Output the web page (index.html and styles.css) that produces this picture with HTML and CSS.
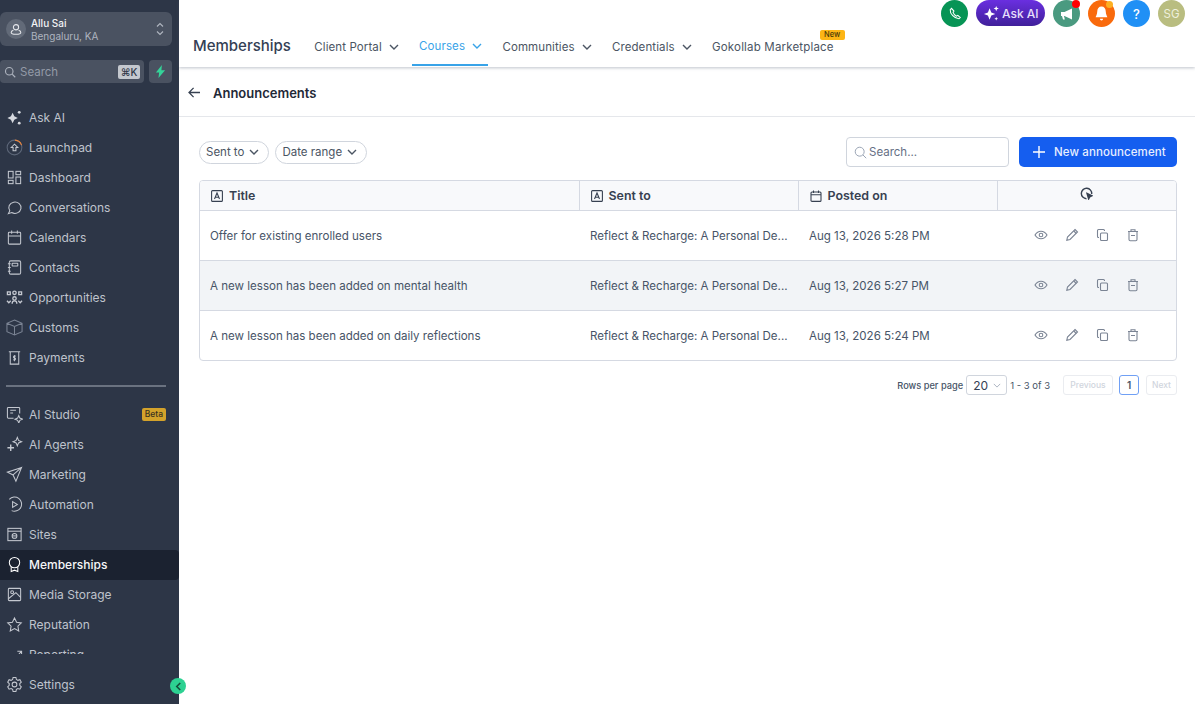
FILE: index.html
```html
<!DOCTYPE html>
<html lang="en">
<head>
<meta charset="utf-8">
<title>Memberships - Announcements</title>
<link rel="stylesheet" href="styles.css">
</head>
<body>
<div class="app">
  <aside class="sidebar">
    <div class="account">
      <span class="avatar"><svg viewBox="0 0 16 16" width="14" height="14" fill="none" stroke="#e5e7eb" stroke-width="1.2"><circle cx="8" cy="6" r="3"/><path d="M5 9.5c-1.500.5-2.500 1.500-2.500 2.500s2 2 5.500 2 5.500-1 5.500-2-1-2-2.500-2.500"/></svg></span>
      <span class="account-text"><b>Allu Sai</b><small>Bengaluru, KA</small></span>
      <svg class="updown" viewBox="0 0 10 16" width="10" height="16" fill="none" stroke="#aeb4bf" stroke-width="1.2"><path d="M2 5.500 5 2.500l3 3M2 10.500l3 3 3-3"/></svg>
    </div>
    <div class="search-row">
      <div class="side-search">
        <svg viewBox="0 0 16 16" width="12" height="12" fill="none" stroke="#aeb4bf" stroke-width="1.500"><circle cx="7" cy="7" r="5"/><path d="m11 11 4 4"/></svg>
        <span class="side-search-label">Search</span>
        <kbd>⌘K</kbd>
      </div>
      <div class="bolt"><svg viewBox="0 0 12 14" width="11" height="13"><path d="M7.500 0 1 8h3.500L3.800 14 11 5.500H7z" fill="#34d399"/></svg></div>
    </div>
    <nav class="nav">
      <a class="item"><svg class="ic ic-fill" viewBox="0 0 18 18"><path d="M7 4 8.800 7.700 12.500 9.500 8.800 11.300 7 15 5.200 11.300 1.500 9.500 5.200 7.700z"/><circle cx="14" cy="3.500" r="1.500"/><circle cx="14" cy="15" r="1.500"/></svg>Ask AI</a>
      <a class="item"><svg class="ic" viewBox="0 0 18 18"><circle cx="9" cy="9" r="7.800" stroke="#5c6678"/><path d="M9.500 1.200A7.800 7.800 0 0 1 16.500 6.500" stroke="#e8833a"/><path d="M5.500 9 9 5.500l3.500 3.500H10.500v3.500h-3V9z"/></svg>Launchpad</a>
      <a class="item"><svg class="ic" viewBox="0 0 18 18"><rect x="2.500" y="2.500" width="5" height="7"/><rect x="10.500" y="2.500" width="5" height="3.500"/><rect x="10.500" y="8.500" width="5" height="7"/><rect x="2.500" y="12" width="5" height="3.500"/></svg>Dashboard</a>
      <a class="item"><svg class="ic" viewBox="0 0 18 18"><path d="M2.500 15.500 4 12.500A6.500 6 0 1 1 6 14.300z"/></svg>Conversations</a>
      <a class="item"><svg class="ic" viewBox="0 0 18 18"><rect x="2.500" y="3.500" width="13" height="12.500" rx="1"/><path d="M2.500 7.500h13M6 1.500v3.500M12 1.500v3.500"/></svg>Calendars</a>
      <a class="item"><svg class="ic" viewBox="0 0 18 18"><rect x="3.500" y="2" width="12" height="14" rx="1.500"/><rect x="6.500" y="4.500" width="6" height="3" rx=".5"/><path d="M2 5h3M2 9h3M2 13h3"/></svg>Contacts</a>
      <a class="item"><svg class="ic ic-dense" viewBox="0 0 18 18"><path d="M1.500 3h3v3h-3zM13.500 3h3v3h-3zM1 12.500l2 2 2-2M13 12.500l2 2 2-2"/><circle cx="9" cy="4" r="1.800"/><circle cx="9" cy="10" r="1.800"/><path d="M6.500 15.500c0-2 1-3 2.500-3s2.500 1 2.500 3"/></svg>Opportunities</a>
      <a class="item"><svg class="ic ic-dim" viewBox="0 0 18 18"><path d="M9 1 17 4.500v9L9 17 1 13.500v-9zM1 4.500 9 8l8-3.500M9 8v9"/></svg>Customs</a>
      <a class="item"><svg class="ic" viewBox="0 0 18 18"><path d="M3 3h12M4.500 3v13h9V3"/><path d="M10.500 7.500H8v2h2v2H7.500M9 6.500v6.500" stroke-width="1"/></svg>Payments</a>
      <hr class="divider">
      <a class="item"><svg class="ic" viewBox="0 0 18 18"><path d="M8 13H2.500a1 1 0 0 1-1-1V2.500a1 1 0 0 1 1-1h11a1 1 0 0 1 1 1V8"/><path d="M4.500 4.500h6M4.500 7.500h3"/><path d="M13.500 10l1.200 2.800 2.800 1.200-2.800 1.200-1.200 2.800-1.200-2.800L9.500 14l2.800-1.200z"/></svg>AI Studio<span class="beta">Beta</span></a>
      <a class="item"><svg class="ic" viewBox="0 0 18 18"><path d="M12 1.500l1.300 3.200 3.200 1.300-3.200 1.300L12 10.500l-1.300-3.200L7.500 6l3.200-1.300z"/><path d="M5 9v7M1.500 12.500h7" stroke-width="1.500"/></svg>AI Agents</a>
      <a class="item"><svg class="ic" viewBox="0 0 18 18"><path d="M16.500 1.500 1.500 6.500l6 3 3 6.500zM7.500 9.500l9-8"/></svg>Marketing</a>
      <a class="item"><svg class="ic" viewBox="0 0 18 18"><path d="M3.500 3.500A7.500 7.500 0 1 1 6 15.500"/><path d="M7 6v6l5-3z"/></svg>Automation</a>
      <a class="item"><svg class="ic" viewBox="0 0 18 18"><rect x="2" y="2.500" width="14" height="13"/><path d="M2 5.500h14"/><circle cx="9" cy="10.500" r="2.500"/><path d="M6.500 10.500h5"/></svg>Sites</a>
      <a class="item active"><svg class="ic" viewBox="0 0 18 18" stroke-width="1.500"><circle cx="9" cy="7" r="5.500"/><path d="M5.500 11.500V16.500L9 15l3.500 1.500V11.500"/></svg>Memberships</a>
      <a class="item"><svg class="ic" viewBox="0 0 18 18"><rect x="2.500" y="2.500" width="13" height="13" rx="1"/><circle cx="6.500" cy="6.500" r="1.500"/><path d="M2.500 13.500 10.500 7l5 5"/></svg>Media Storage</a>
      <a class="item"><svg class="ic" viewBox="0 0 18 18"><path d="m9 2 2.200 4.600 5 .7-3.600 3.500.9 5L9 13.400l-4.500 2.400.9-5L1.800 7.300l5-.7z"/></svg>Reputation</a>
      <a class="item"><svg class="ic" viewBox="0 0 18 18"><path d="M2 15l5-5 3 3 6-7M12 5.500h4.500V10"/></svg>Reporting</a>
    </nav>
    <div class="settings">
      <a class="item"><svg class="ic" viewBox="0 0 18 18"><circle cx="9" cy="9" r="2.500"/><path d="M7.500 1.500h3l.5 2.200 1.600.9 2.100-.7 1.500 2.600-1.600 1.500v1.900l1.600 1.500-1.500 2.600-2.100-.7-1.600.9-.5 2.300h-3L7 14.200l-1.600-.9-2.100.7-1.500-2.600L3.400 9.900V8L1.800 6.500l1.500-2.600 2.100.7L7 3.700z"/></svg>Settings</a>
    </div>
    <span class="collapse"><svg viewBox="0 0 8 10" width="7" height="9" fill="none" stroke="#134e3a" stroke-width="1.800"><path d="M6 1 2 5l4 4"/></svg></span>
  </aside>

  <main class="main">
    <header class="header">
      <div class="top-actions">
        <span class="round phone"><svg viewBox="0 0 16 16" width="14" height="14" fill="none" stroke="#fff" stroke-width="1.200"><path d="M4 1.500 2.500 3c-.5 4.500 5 10.500 10 10.500l1.500-1.500-2.800-2.500-1.700 1C8 9.800 6.500 8 5.800 6.200l1-1.500z"/></svg></span>
        <span class="ask-ai"><svg viewBox="0 0 18 18" width="17" height="17" fill="#fff"><path d="M7 3.500 8.800 8 13 9.500 8.800 11 7 15.500 5.200 11 1 9.500 5.200 8z"/><path d="M14 1l.8 2 2 .8-2 .8-.8 2-.8-2-2-.8 2-.8zM14 12.500l.6 1.400 1.400.6-1.400.6-.6 1.400-.6-1.400-1.400-.6 1.400-.6z"/></svg>Ask AI</span>
        <span class="round megaphone"><svg viewBox="0 0 16 16" width="16" height="16" fill="#fff"><path d="M2 6h3.500L13 2.500v11L5.500 10H5l.8 3.500H4L3 10H2z"/></svg><i class="dot dot-red"></i></span>
        <span class="round bell"><svg viewBox="0 0 16 16" width="17" height="17" fill="#fff"><path d="M8 1.500c-2.500 0-4 2-4 4.500 0 3-1.500 4.500-1.500 5.500h11c0-1-1.500-2.500-1.500-5.500 0-2.500-1.500-4.500-4-4.500zM6.500 13h3a1.500 1.500 0 0 1-3 0z"/></svg><i class="dot dot-amber"></i></span>
        <span class="round help">?</span>
        <span class="round user">SG</span>
      </div>
      <div class="tabs">
        <h1 class="app-title">Memberships</h1>
        <a class="tab">Client Portal<svg class="chev" viewBox="0 0 10 6"><path d="m1 1 4 4 4-4"/></svg></a>
        <a class="tab tab-active">Courses<svg class="chev" viewBox="0 0 10 6"><path d="m1 1 4 4 4-4"/></svg></a>
        <a class="tab">Communities<svg class="chev" viewBox="0 0 10 6"><path d="m1 1 4 4 4-4"/></svg></a>
        <a class="tab">Credentials<svg class="chev" viewBox="0 0 10 6"><path d="m1 1 4 4 4-4"/></svg></a>
        <a class="tab tab-market">Gokollab Marketplace<span class="new">New</span></a>
      </div>
    </header>

    <div class="subhead">
      <svg viewBox="0 0 14 12" width="13" height="11" fill="none" stroke="#374151" stroke-width="1.400"><path d="M13 6H1.500M6 1 1 6l5 5"/></svg>
      <h2>Announcements</h2>
    </div>

    <section class="content">
      <div class="toolbar">
        <button class="chip">Sent to<svg class="chev" viewBox="0 0 10 6"><path d="m1 1 4 4 4-4"/></svg></button>
        <button class="chip">Date range<svg class="chev" viewBox="0 0 10 6"><path d="m1 1 4 4 4-4"/></svg></button>
        <div class="spacer"></div>
        <div class="search">
          <svg viewBox="0 0 16 16" width="13" height="13" fill="none" stroke="#98a2b3" stroke-width="1.200"><circle cx="7" cy="7" r="5.500"/><path d="m11 11 4 4"/></svg>
          <span>Search...</span>
        </div>
        <button class="primary"><svg viewBox="0 0 12 12" width="12" height="12" fill="none" stroke="#fff" stroke-width="1.400"><path d="M6 0v12M0 6h12"/></svg>New announcement</button>
      </div>

      <div class="table-wrap">
        <table class="table">
          <colgroup><col class="c1"><col class="c2"><col class="c3"><col class="c4"></colgroup>
          <thead>
            <tr>
              <th><span class="th"><svg class="th-ic" viewBox="0 0 12 12"><rect x=".6" y=".6" width="10.800" height="10.800" rx="1"/><path d="M3.500 9 6 3l2.500 6M4.300 7.200h3.400"/></svg>Title</span></th>
              <th><span class="th"><svg class="th-ic" viewBox="0 0 12 12"><rect x=".6" y=".6" width="10.800" height="10.800" rx="1"/><path d="M3.500 9 6 3l2.500 6M4.300 7.200h3.400"/></svg>Sent to</span></th>
              <th><span class="th"><svg class="th-ic" viewBox="0 0 12 12"><rect x="1" y="2" width="10" height="9.400" rx="1"/><path d="M1 4.800h10M3.500 .5v2.500M8.500 .5v2.500"/></svg>Posted on</span></th>
              <th class="th-center"><svg class="th-ic refresh" viewBox="0 0 12 12"><path d="M10.800 6.500A4.800 4.800 0 1 0 6 10.800"/><path d="M6.500 6 11 8 9 9l-1 2z" fill="#374151"/></svg></th>
            </tr>
          </thead>
          <tbody>
            <tr>
              <td class="title-cell">Offer for existing enrolled users</td>
              <td>Reflect &amp; Recharge: A Personal De...</td>
              <td>Aug 13, 2026 5:28 PM</td>
              <td><div class="acts">
                <svg viewBox="0 0 14 14"><path d="M1 7c1.500-2.500 3.500-3.800 6-3.800S11.500 4.500 13 7c-1.500 2.500-3.500 3.800-6 3.800S2.500 9.500 1 7z"/><circle cx="7" cy="7" r="1.800"/></svg>
                <svg viewBox="0 0 14 14"><path d="M10 1.500 12.500 4 5 11.500 1.800 12.300 2.500 9z"/><path d="M8.800 3l2.500 2.500"/></svg>
                <svg viewBox="0 0 14 14"><path d="M9.500 3V2.500a1 1 0 0 0-1-1h-5a1 1 0 0 0-1 1v6a1 1 0 0 0 1 1H4"/><rect x="5.500" y="5" width="7" height="7.500" rx="1"/></svg>
                <svg viewBox="0 0 14 14"><path d="M2 3.500h10M5 3.500V1.800h4v1.700M3 3.500v8a1.200 1.200 0 0 0 1.200 1.200h5.600A1.200 1.200 0 0 0 11 11.500v-8M5 7.500h4"/></svg>
              </div></td>
            </tr>
            <tr class="hovered">
              <td class="title-cell">A new lesson has been added on mental health</td>
              <td>Reflect &amp; Recharge: A Personal De...</td>
              <td>Aug 13, 2026 5:27 PM</td>
              <td><div class="acts">
                <svg viewBox="0 0 14 14"><path d="M1 7c1.500-2.500 3.500-3.800 6-3.800S11.500 4.500 13 7c-1.500 2.500-3.500 3.800-6 3.800S2.500 9.500 1 7z"/><circle cx="7" cy="7" r="1.800"/></svg>
                <svg viewBox="0 0 14 14"><path d="M10 1.500 12.500 4 5 11.500 1.800 12.300 2.500 9z"/><path d="M8.800 3l2.500 2.500"/></svg>
                <svg viewBox="0 0 14 14"><path d="M9.500 3V2.500a1 1 0 0 0-1-1h-5a1 1 0 0 0-1 1v6a1 1 0 0 0 1 1H4"/><rect x="5.500" y="5" width="7" height="7.500" rx="1"/></svg>
                <svg viewBox="0 0 14 14"><path d="M2 3.500h10M5 3.500V1.800h4v1.700M3 3.500v8a1.200 1.200 0 0 0 1.200 1.200h5.600A1.200 1.200 0 0 0 11 11.500v-8M5 7.500h4"/></svg>
              </div></td>
            </tr>
            <tr>
              <td class="title-cell">A new lesson has been added on daily reflections</td>
              <td>Reflect &amp; Recharge: A Personal De...</td>
              <td>Aug 13, 2026 5:24 PM</td>
              <td><div class="acts">
                <svg viewBox="0 0 14 14"><path d="M1 7c1.500-2.500 3.500-3.800 6-3.800S11.500 4.500 13 7c-1.500 2.500-3.500 3.800-6 3.800S2.500 9.500 1 7z"/><circle cx="7" cy="7" r="1.800"/></svg>
                <svg viewBox="0 0 14 14"><path d="M10 1.500 12.500 4 5 11.500 1.800 12.300 2.500 9z"/><path d="M8.800 3l2.500 2.500"/></svg>
                <svg viewBox="0 0 14 14"><path d="M9.500 3V2.500a1 1 0 0 0-1-1h-5a1 1 0 0 0-1 1v6a1 1 0 0 0 1 1H4"/><rect x="5.500" y="5" width="7" height="7.500" rx="1"/></svg>
                <svg viewBox="0 0 14 14"><path d="M2 3.500h10M5 3.500V1.800h4v1.700M3 3.500v8a1.200 1.200 0 0 0 1.200 1.200h5.600A1.200 1.200 0 0 0 11 11.500v-8M5 7.500h4"/></svg>
              </div></td>
            </tr>
          </tbody>
        </table>
      </div>

      <div class="pager">
        <span class="rows-label">Rows per page</span>
        <span class="rows-select">20<svg class="chev" viewBox="0 0 10 6"><path d="m1 1 4 4 4-4"/></svg></span>
        <span class="range">1 - 3 of 3</span>
        <span class="pg pg-prev">Previous</span>
        <span class="pg pg-current">1</span>
        <span class="pg pg-next">Next</span>
      </div>
    </section>
  </main>
</div>
</body>
</html>
```
FILE: styles.css
```css
* { box-sizing: border-box; }
html, body { margin: 0; height: 100%; }
body { font-family: Inter, "Liberation Sans", sans-serif; color: #374151; background: #fff; overflow: hidden; }
.app { display: flex; height: 704px; width: 1195px; }

.sidebar { position: relative; flex: 0 0 179px; width: 179px; background: #2d3647; display: flex; flex-direction: column; padding-top: 12px; }
.account { display: flex; align-items: center; width: 172px; height: 34px; background: #4a5261; padding: 0 7px 0 6px; border-radius: 6px; }
.avatar { width: 20px; height: 20px; border-radius: 50%; background: #626a78; display: flex; align-items: center; justify-content: center; flex: none; }
.account-text { display: flex; flex-direction: column; margin-left: 5px; padding-top: 1px; flex: 1; line-height: 13px; }
.account-text b { font-size: 10px; font-weight: 500; color: #f3f4f6; }
.account-text small { font-size: 10px; color: #aeb4bf; }
.search-row { display: flex; gap: 5px; margin-top: 14px; width: 172px; height: 23px; }
.side-search { flex: 1; background: #4a5261; border-radius: 4px; display: flex; align-items: center; padding: 0 4px 0 4px; }
.side-search-label { flex: 1; margin-left: 4px; font-size: 11.500px; color: #939aa7; }
kbd { font-family: Inter, sans-serif; font-size: 10px; font-weight: 500; background: #c4c8ce; color: #2d3647; border-radius: 2px; padding: 1px 2.500px; line-height: 12px; }
.bolt { width: 23px; background: #4a5261; border-radius: 4px; display: flex; align-items: center; justify-content: center; }

.nav { height: 551px; overflow: hidden; margin-top: 20px; flex: none; }
.item { display: flex; align-items: center; height: 30px; padding: 0 0 1px 6px; font-size: 12px; color: #bfc3cc; }
.ic { width: 17px; height: 17px; margin-right: 6px; flex: none; fill: none; stroke: #c4c8d0; stroke-width: 1.100; }
.ic-fill { fill: #d5d8de; stroke: none; }
.ic-dense { stroke-width: 1.400; }
.ic-dim { stroke: #7b8494; }
.item.active { background: #1b2230; color: #f6f7f9; font-weight: 500; border-radius: 0 4px 4px 0; }
.item.active .ic { stroke: #fff; }
.divider { border: 0; height: 2px; background: #6a7280; margin: 12px 13px 13px 6px; }
.beta { margin-left: auto; margin-right: 13px; background: #d3a22b; color: #3a3320; border-radius: 2px; font-size: 8.500px; font-weight: 500; padding: 1px 3px; line-height: 11px; }
.settings { margin-top: 16px; }
.collapse { position: absolute; left: 170px; top: 678px; width: 16px; height: 16px; border-radius: 50%; background: #2dd192; display: flex; align-items: center; justify-content: center; }

.main { flex: 1; min-width: 0; display: flex; flex-direction: column; }
.header { height: 67px; background: #fff; box-shadow: 0 1px 3px rgba(71, 85, 105, .35); display: flex; flex-direction: column; position: relative; }
.top-actions { display: flex; justify-content: flex-end; gap: 8px; padding-right: 10px; height: 27px; }
.round { position: relative; width: 27px; height: 27px; border-radius: 50%; display: flex; align-items: center; justify-content: center; color: #fff; font-size: 12px; }
.phone { background: #079455; }
.megaphone { background: #4a9a80; }
.bell { background: #f96a0c; }
.help { background: #2090f5; font-weight: 500; font-size: 13px; }
.user { background: #b9bd80; font-size: 11.500px; color: #eef0dc; }
.ask-ai { display: flex; align-items: center; gap: 2px; width: 69px; height: 26px; padding-left: 7px; border-radius: 13px; color: #e6defa; font-size: 12px; font-weight: 500; background: linear-gradient(#6a2fe0, #40209a); }
.dot { position: absolute; border-radius: 50%; }
.dot-red { width: 8px; height: 8px; background: #f00; top: 0; right: 0; }
.dot-amber { width: 7px; height: 7px; background: #fdb022; top: 1px; right: 2px; }

.tabs { display: flex; align-items: flex-start; height: 38px; margin-top: 1px; padding-left: 14px; gap: 7.300px; }
.app-title { margin: 0 10px 0 0; font-size: 15px; font-weight: 500; color: #344054; width: 97px; line-height: 36px; white-space: nowrap; }
.tab { position: relative; display: flex; align-items: center; gap: 7px; padding: 0 6px 0 7px; height: 38px; font-size: 11.500px; color: #4b5563; letter-spacing: .1px; white-space: nowrap; }
.chev { width: 10px; height: 6px; fill: none; stroke: currentColor; stroke-width: 1.400; }
.tab-active { color: #38a3e8; border-bottom: 2px solid #38a3e8; padding-right: 6px; }
.tab-market { padding-right: 0; letter-spacing: .18px; }
.new { position: absolute; right: -11px; top: 2px; background: #fdb515; color: #4a3a08; font-size: 7.500px; line-height: 10px; font-weight: 500; padding: 0 4.500px; border-radius: 2px; letter-spacing: 0; }

.subhead { height: 50px; display: flex; align-items: center; padding: 2px 0 0 9px; gap: 12px; border-bottom: 1px solid #e5e7eb; }
.subhead h2 { margin: 0; font-size: 13px; font-weight: 600; color: #1f2937; }

.content { padding: 20px 18px 0 20px; }
.toolbar { display: flex; align-items: center; gap: 6px; height: 30px; }
.chip { display: flex; align-items: center; gap: 5px; height: 23px; padding: 0 9px 0 6px; background: #fff; border: 1px solid #d0d5dd; border-radius: 12px; font: 11.500px Inter, sans-serif; color: #4b5563; }
.spacer { flex: 1; }
.search { display: flex; align-items: center; gap: 2px; width: 163px; height: 30px; padding-left: 7px; border: 1px solid #d0d5dd; border-radius: 4px; font-size: 11.500px; color: #667085; }
.primary { display: flex; align-items: center; gap: 9px; width: 158px; height: 30px; margin-left: 4px; padding: 0 0 0 14px; background: #155eef; color: #e8efff; border: 0; border-radius: 5px; font: 500 11.500px Inter, sans-serif; letter-spacing: .1px; white-space: nowrap; }

.table-wrap { margin-top: 13px; border: 1px solid #d5d9e2; border-radius: 4px; overflow: hidden; }
.table { width: 976px; border-collapse: collapse; table-layout: fixed; }
.c1 { width: 379px; } .c2 { width: 219px; } .c3 { width: 199px; } .c4 { width: 179px; }
thead tr { height: 29px; background: #f8f9fb; border-bottom: 1px solid #d5d9e2; }
th { padding: 1px 0 0 11px; text-align: left; border-right: 1px solid #d5d9e2; font-size: 12.400px; font-weight: 600; color: #374151; }
th:last-child { border-right: 0; }
.th { display: flex; align-items: center; gap: 6px; }
.th-ic { width: 12px; height: 12px; fill: none; stroke: #374151; stroke-width: 1.100; flex: none; }
.th-center { text-align: center; padding: 0; }
.refresh { display: block; width: 13px; height: 13px; margin: 0 auto 3px; stroke-width: 1.300; }
tbody tr { height: 50px; border-bottom: 1px solid #d5d9e2; }
tbody tr:last-child { border-bottom: 0; }
.hovered { background: #f2f4f7; }
td { padding: 1px 0 0 11px; font-size: 11.550px; color: #475467; white-space: nowrap; overflow: hidden; }
td.title-cell { padding-left: 10px; }
.acts { display: flex; gap: 16.700px; padding-left: 26px; margin-top: -2px; }
.acts svg { width: 14px; height: 14px; fill: none; stroke: #7b8494; stroke-width: 1.100; flex: none; }

.pager { display: flex; justify-content: flex-end; align-items: center; height: 20px; margin-top: 14px; font-size: 9.500px; color: #475467; }
.rows-label { font-weight: 500; font-size: 9.250px; }
.rows-select { display: flex; align-items: center; gap: 5px; width: 41px; height: 20px; margin: 0 3px 0 3px; padding-left: 6px; border: 1px solid #d0d5dd; border-radius: 3px; font-size: 12px; color: #344054; }
.rows-select .chev { width: 8px; height: 5px; stroke: #98a2b3; stroke-width: 1; }
.range { margin-right: 13px; }
.pg { display: flex; align-items: center; justify-content: center; height: 20px; border: 1px solid #eaecf0; border-radius: 3px; color: #d0d5dd; font-weight: 500; font-size: 8.500px; }
.pg-prev { width: 50px; }
.pg-current { width: 20px; margin: 0 7px 0 6px; border: 1px solid #70a0f5; color: #475467; font-size: 10px; font-weight: 600; }
.pg-next { width: 31px; }
```
